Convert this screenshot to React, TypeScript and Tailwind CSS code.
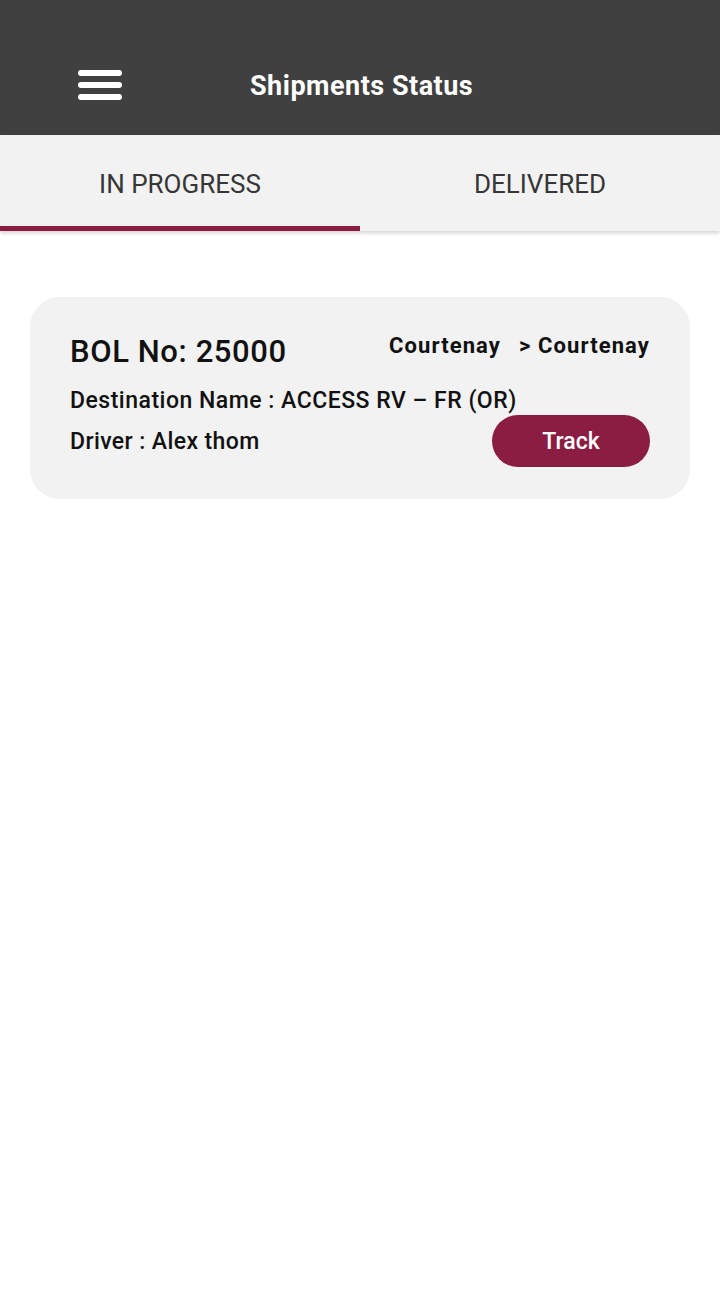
import React from "react";

export default function App() {
  return (
    <div className="w-[720px] h-[1305px] bg-white flex flex-col" style={{ fontFamily: "Roboto, 'Noto Sans', sans-serif" }}>
      <header className="h-[135px] bg-[#404040] pt-[70px] shrink-0">
        <div className="h-[30px] flex items-center">
          <div className="ml-[78px] w-[44px] flex flex-col gap-[6px]">
            <span className="block h-[6px] rounded-full bg-white" />
            <span className="block h-[6px] rounded-full bg-white" />
            <span className="block h-[6px] rounded-full bg-white" />
          </div>
          <h1 className="ml-[128px] text-white text-[27px] font-bold leading-none tracking-[0.5px] mt-[3px]">Shipments Status</h1>
        </div>
      </header>
      <nav className="h-[96px] bg-[#f2f2f2] flex shadow-[0_2px_4px_rgba(0,0,0,0.18)] shrink-0 relative z-10">
        <div className="w-1/2 flex flex-col">
          <div className="flex-1 flex items-center justify-center text-[26px] text-[#363636] pt-[8px]">IN PROGRESS</div>
          <div className="h-[5px] bg-[#8c1c40]" />
        </div>
        <div className="w-1/2 flex flex-col">
          <div className="flex-1 flex items-center justify-center text-[26px] text-[#363636] pt-[8px]">DELIVERED</div>
          <div className="h-[5px]" />
        </div>
      </nav>
      <main className="px-[30px] pt-[66px]">
        <div className="bg-[#f2f2f2] rounded-[30px] h-[202px] pl-[40px] pr-[40px] pt-[34px]">
          <div className="flex items-start justify-between">
            <div className="text-[31px] font-medium text-[#111] leading-none mt-[5px] tracking-[0.6px]">BOL No: 25000</div>
            <div className="flex gap-[18px] text-[22px] font-bold text-[#111] leading-none mt-[4px] tracking-[1.1px]">
              <span>Courtenay</span>
              <span>&gt; Courtenay</span>
            </div>
          </div>
          <div className="mt-[22px] text-[23px] font-medium text-[#111] leading-none tracking-[0.5px]">Destination Name : ACCESS RV – FR (OR)</div>
          <div className="flex items-start justify-between mt-[3px]">
            <div className="text-[23px] font-medium text-[#111] leading-none mt-[15px] tracking-[0.4px]">Driver : Alex thom</div>
            <button className="w-[158px] h-[52px] rounded-full bg-[#8b1c42] text-white text-[23px] font-medium leading-none pt-[1px]">Track</button>
          </div>
        </div>
      </main>
    </div>
  );
}
